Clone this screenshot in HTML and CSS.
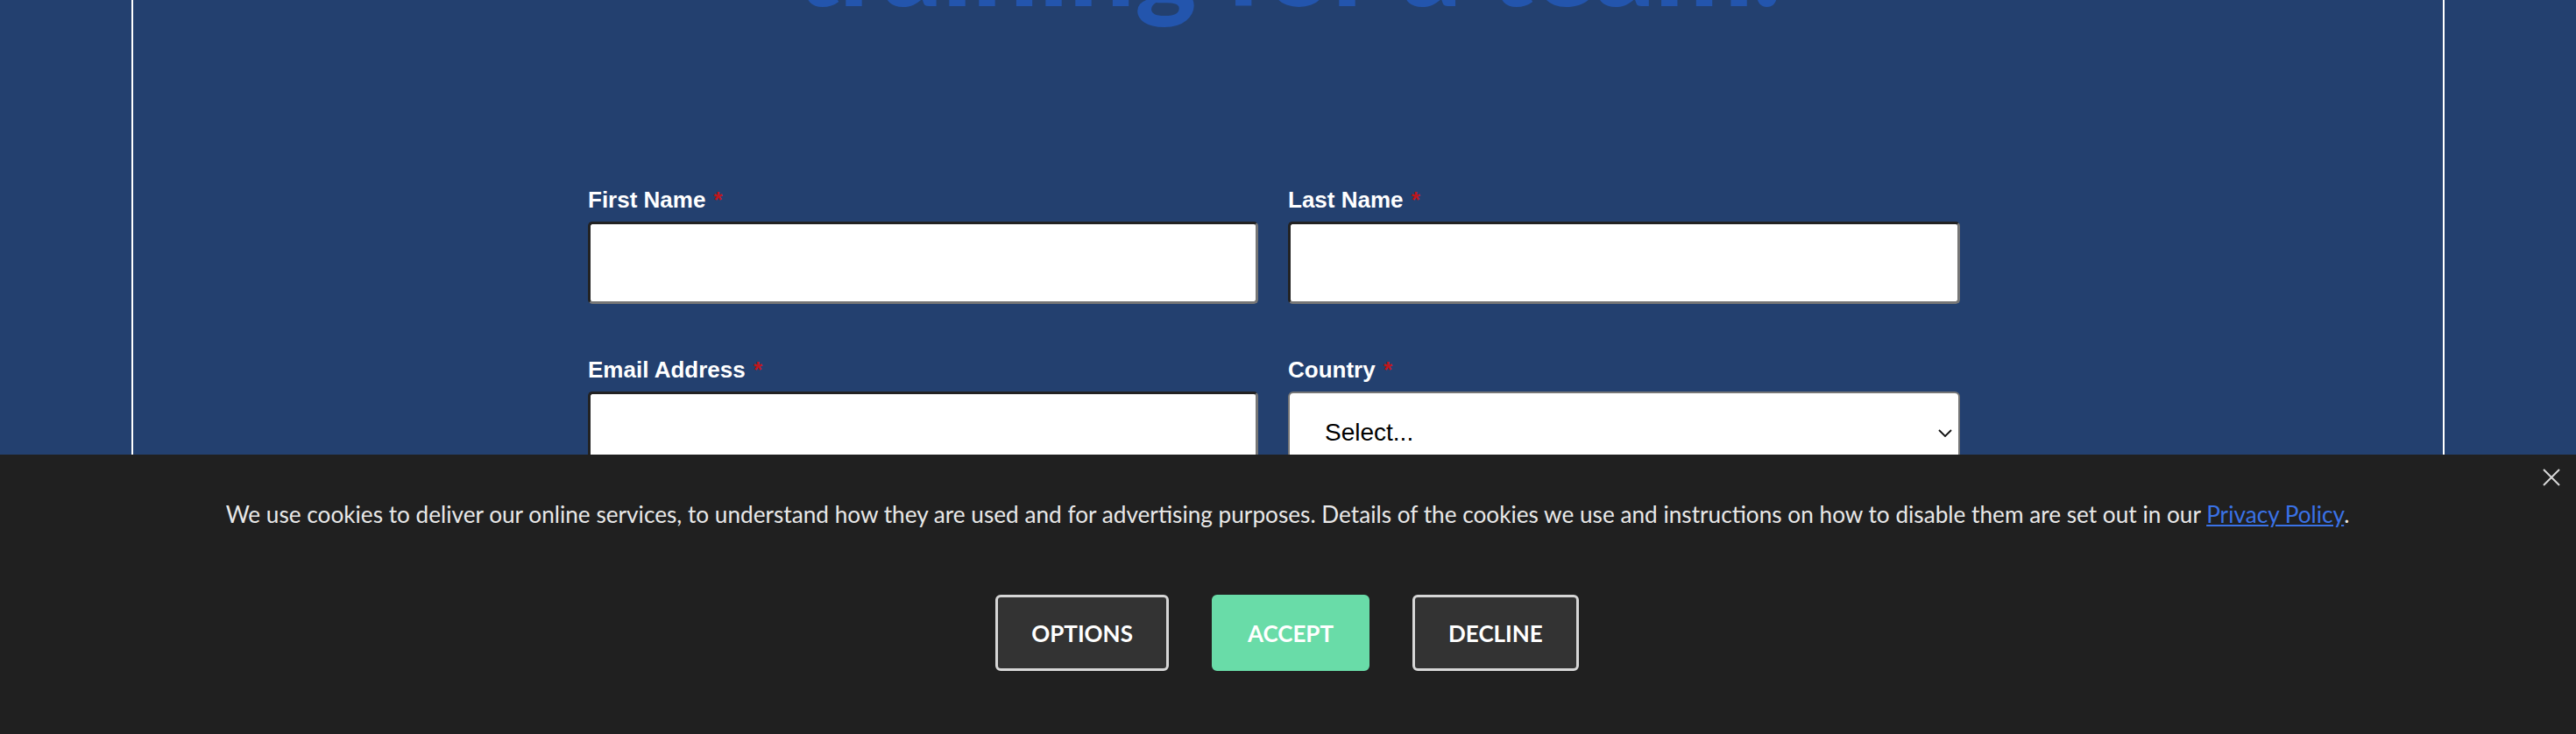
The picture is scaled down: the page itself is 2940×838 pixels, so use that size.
FILE: index.html
```html
<!DOCTYPE html>
<html lang="en">
<head>
<meta charset="utf-8">
<title>Training for a team</title>
<link rel="stylesheet" href="styles.css">
</head>
<body>
<div class="frame">
  <h2 class="headline">training for a team.</h2>
  <form class="form">
    <div class="field">
      <label class="label">First Name <span class="req">*</span></label>
      <input class="input" type="text">
    </div>
    <div class="field">
      <label class="label">Last Name <span class="req">*</span></label>
      <input class="input" type="text">
    </div>
    <div class="field">
      <label class="label">Email Address <span class="req">*</span></label>
      <input class="input" type="email">
    </div>
    <div class="field">
      <label class="label">Country <span class="req">*</span></label>
      <div class="select">
        <span class="select-text">Select...</span>
        <svg class="chevron" width="16" height="9" viewBox="0 0 16 9"><path d="M1 1 L8 8 L15 1" fill="none" stroke="#111" stroke-width="1.8"/></svg>
      </div>
    </div>
  </form>
</div>

<div class="cookie">
  <button class="close" type="button" aria-label="Close">
    <svg width="20" height="20" viewBox="0 0 20 20"><path d="M1 1 L19 19 M19 1 L1 19" stroke="#d8d8d8" stroke-width="2" fill="none"/></svg>
  </button>
  <p class="cookie-text">We use cookies to deliver our online services, to understand how they are used and for advertising purposes. Details of the cookies we use and instructions on how to disable them are set out in our <a href="#" class="link">Privacy Policy</a>.</p>
  <div class="actions">
    <button class="btn btn-dark" type="button">Options</button>
    <button class="btn btn-accept" type="button">Accept</button>
    <button class="btn btn-dark" type="button">Decline</button>
  </div>
</div>
</body>
</html>
```

FILE: styles.css
```css
html, body {
  margin: 0;
  padding: 0;
}
body {
  background: #23406f;
  width: 2940px;
  height: 838px;
  overflow: hidden;
  font-family: "Liberation Sans", Arial, sans-serif;
}
.frame {
  margin: 0 150px;
  height: 838px;
  border-left: 2px solid #ffffff;
  border-right: 2px solid #ffffff;
  box-sizing: border-box;
}
.headline {
  margin: -111px 0 0 0;
  font-family: Lato, sans-serif;
  font-weight: 900;
  font-size: 133px;
  line-height: 133px;
  color: #2355ad;
  text-align: center;
}
.form {
  margin: 191px 0 0 519px;
  display: grid;
  grid-template-columns: 765px 767px;
  column-gap: 34px;
  row-gap: 60px;
}
.field {
  display: flex;
  flex-direction: column;
}
.label {
  font-weight: 700;
  font-size: 26px;
  line-height: 30px;
  color: #ffffff;
  margin-bottom: 10px;
}
.req {
  color: #c0161b;
  margin-left: 2px;
}
.input {
  box-sizing: border-box;
  height: 94px;
  width: 100%;
  margin: 0;
  background: #ffffff;
  border: 3px solid;
  border-color: #222222 #767676 #767676 #222222;
  border-radius: 5px;
  font-size: 28px;
}
.select {
  box-sizing: border-box;
  height: 94px;
  background: #ffffff;
  border: 2px solid #767676;
  border-radius: 6px;
  display: flex;
  align-items: center;
  justify-content: space-between;
  padding: 0 7px 0 40px;
}
.select-text {
  font-size: 28px;
  color: #000000;
}
.chevron {
  display: block;
}
.cookie {
  position: fixed;
  left: 0;
  right: 0;
  bottom: 0;
  height: 319px;
  background: #202020;
  box-sizing: border-box;
  padding: 48px 51px 0 50px;
}
.close {
  position: absolute;
  top: 16px;
  right: 18px;
  width: 20px;
  height: 20px;
  padding: 0;
  border: 0;
  background: none;
  display: flex;
}
.cookie-text {
  margin: 0;
  font-family: Lato, sans-serif;
  font-size: 26.2px;
  line-height: 40px;
  color: #e8e8e8;
  text-align: center;
}
.link {
  color: #3a72e6;
  text-decoration: underline;
}
.actions {
  margin-top: 72px;
  display: flex;
  justify-content: center;
  gap: 49px;
  padding-right: 1px;
}
.btn {
  box-sizing: border-box;
  height: 87px;
  padding: 0 38px;
  border: 3px solid #d6d6d6;
  border-radius: 6px;
  background: #333333;
  color: #ffffff;
  font-family: Lato, sans-serif;
  font-weight: 700;
  font-size: 26px;
  text-transform: uppercase;
}
.btn-accept {
  background: #69dca8;
  border-color: #69dca8;
}
```
